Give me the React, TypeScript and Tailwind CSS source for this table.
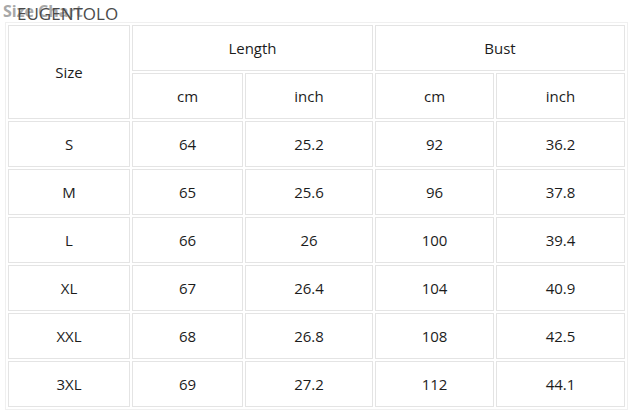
const rows = [
  ['S', '64', '25.2', '92', '36.2'],
  ['M', '65', '25.6', '96', '37.8'],
  ['L', '66', '26', '100', '39.4'],
  ['XL', '67', '26.4', '104', '40.9'],
  ['XXL', '68', '26.8', '108', '42.5'],
  ['3XL', '69', '27.2', '112', '44.1'],
];

const cell = 'h-[46px] p-0 border border-[#e4e4e4] text-center align-middle';

export default function App() {
  return (
    <div className="w-[633px] h-[413px] bg-white overflow-hidden font-['Open_Sans','Noto_Sans',sans-serif] text-[15px] text-[#1c1c1c]">
      {/* watermark title */}
      <div className="relative h-[22px]">
        <span className="absolute left-[3px] top-[0px] text-[16px] font-bold text-[#a8a8a8] leading-[22px]">Size Chart</span>
        <span className="absolute left-[17px] top-[1px] text-[17px] text-[#4a4a4a] leading-[26px]">EUGENTOLO</span>
      </div>

      <div className="pl-[5px]">
        <table className="table-fixed border-separate border-spacing-[2px] border border-[#f0f0f0] w-[623px]">
          <colgroup>
            <col className="w-[122px]" />
            <col className="w-[111px]" />
            <col className="w-[128px]" />
            <col className="w-[119px]" />
            <col className="w-[129px]" />
          </colgroup>
          <tbody>
            <tr>
              <td rowSpan={2} className={cell}>Size</td>
              <td colSpan={2} className={cell}>Length</td>
              <td colSpan={2} className={cell}>Bust</td>
            </tr>
            <tr>
              <td className={cell}>cm</td>
              <td className={cell}>inch</td>
              <td className={cell}>cm</td>
              <td className={cell}>inch</td>
            </tr>
            {rows.map((r) => (
              <tr key={r[0]}>
                {r.map((v, i) => (
                  <td key={i} className={cell}>{v}</td>
                ))}
              </tr>
            ))}
          </tbody>
        </table>
      </div>
    </div>
  );
}
